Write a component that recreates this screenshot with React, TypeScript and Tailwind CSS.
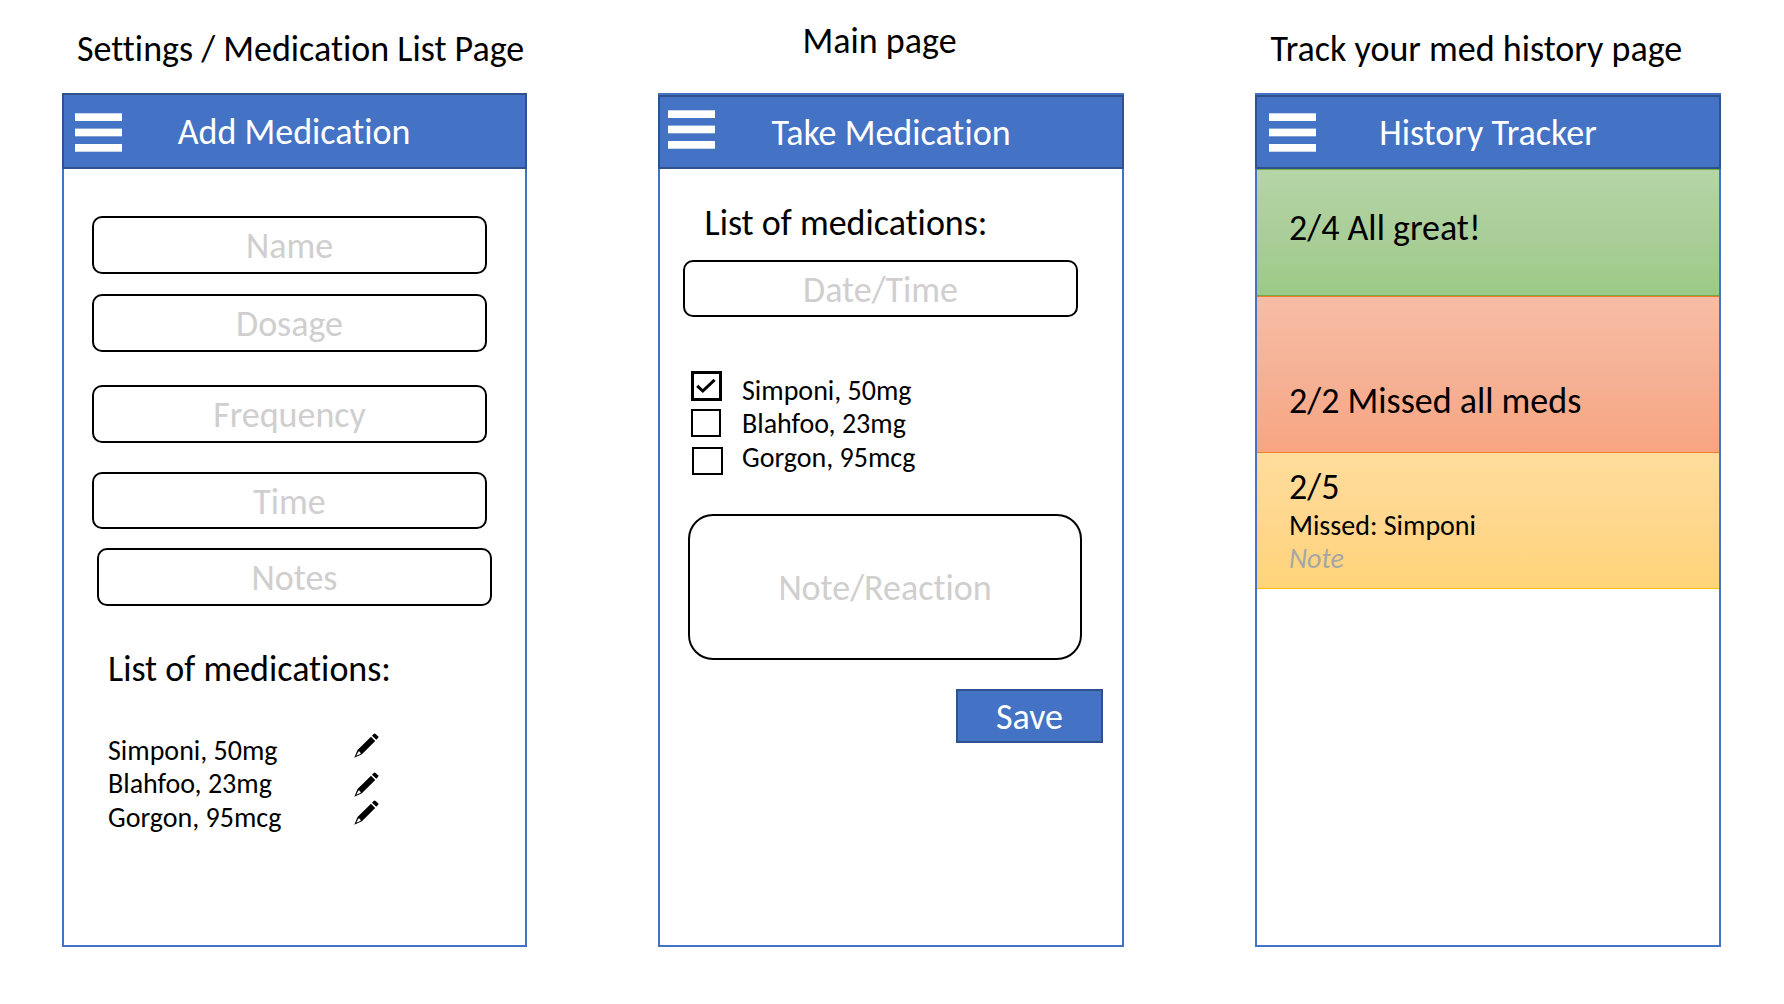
import type { ReactNode } from "react";

function MenuIcon() {
  return (
    <svg width="47" height="39" viewBox="0 0 47 39" fill="#fff" className="shrink-0">
      <rect x="0" y="0.3" width="47" height="7.7" />
      <rect x="0" y="15.6" width="47" height="7.7" />
      <rect x="0" y="31" width="47" height="7.7" />
    </svg>
  );
}

function PencilIcon({ className = "" }: { className?: string }) {
  return (
    <svg width="25" height="25" viewBox="0 0 25 25" className={className}>
      <path d="M18 2.7 19.6 1 Q20.6 0.2 21.6 1 L24 3.3 Q24.8 4.2 24 5.1 L22.3 6.8Z" />
      <path
        fillRule="evenodd"
        d="M17 3.8 21.2 7.9 7.9 21.2 0.3 24.7 3.5 16.9ZM4.5 18.4 2.4 22.2 2.9 22.6 6.7 20.7 Q6.9 19.4 5.8 19.2 Q5.6 18.2 4.5 18.4Z"
      />
    </svg>
  );
}

function Field({ label, className = "" }: { label: string; className?: string }) {
  return (
    <div
      className={`flex w-[395px] items-center justify-center rounded-[10px] border-2 border-black pt-0.5 text-[#d0cece] ${className}`}
    >
      {label}
    </div>
  );
}

function Header({ title, className = "" }: { title: string; className?: string }) {
  return (
    <div
      className={`-mx-0.5 flex items-start border-2 border-[#2f528f] bg-[#4472c4] text-white ${className}`}
    >
      <MenuIcon />
      <div className="flex-1 text-center">{title}</div>
    </div>
  );
}

function Screen({ children }: { children: ReactNode }) {
  return <div className="flex h-[854px] flex-col border-2 border-[#4472c4] bg-white">{children}</div>;
}

const medications = ["Simponi, 50mg", "Blahfoo, 23mg", "Gorgon, 95mcg"];

function MedicationList() {
  return (
    <div className="text-[28px] leading-[33.5px]">
      {medications.map((m) => (
        <div key={m}>{m}</div>
      ))}
    </div>
  );
}

function SettingsPage() {
  return (
    <section className="w-[465px] pt-[27px]">
      <h2 className="mb-[22px] ml-[15px]">Settings / Medication List Page</h2>
      <Screen>
        <Header title="Add Medication" className="-mt-0.5 h-[76px] pt-[18px] pr-[59px] pl-[11px] [&>div]:-mt-[3px]" />
        <div className="ml-7 flex flex-col">
          <Field label="Name" className="mt-[47px] h-[58px]" />
          <Field label="Dosage" className="mt-5 h-[58px]" />
          <Field label="Frequency" className="mt-[33px] h-[58px]" />
          <Field label="Time" className="mt-[29px] h-[57px]" />
          <Field label="Notes" className="mt-[19px] ml-[5px] h-[58px]" />
        </div>
        <div className="mt-[41px] ml-[44px]">
          <h3>List of medications:</h3>
          <div className="mt-[42px] flex">
            <div className="w-[246px] pt-[0.6px]">
              <MedicationList />
            </div>
            <div className="flex flex-col">
              <PencilIcon />
              <PencilIcon className="mt-[13.5px]" />
              <PencilIcon className="mt-[3px]" />
            </div>
          </div>
        </div>
      </Screen>
    </section>
  );
}

function MainPage() {
  return (
    <section className="w-[466px] pt-[19px]">
      <h2 className="mb-[30px] ml-[144.5px]">Main page</h2>
      <Screen>
        <Header title="Take Medication" className="h-[74px] pt-[13px] pr-[55px] pl-2 [&>div]:mt-px" />
        <h3 className="mt-[32px] ml-[44.5px]">List of medications:</h3>
        <Field label="Date/Time" className="mt-[15px] ml-[23px] h-[57px]" />
        <div className="mt-[54px] ml-[31px] flex">
          <div className="flex w-[51px] flex-col">
            <div className="flex h-[30px] w-[30.5px] items-center justify-center border-[3px] border-black">
              <svg width="20" height="16" viewBox="0 0 20 16" fill="none" stroke="#000" strokeWidth="3">
                <path d="M1.2 7.8 6.8 13 18.6 1.8" />
              </svg>
            </div>
            <div className="mt-2 h-7 w-[30px] border-2 border-black" />
            <div className="mt-2.5 ml-px h-7 w-[31px] border-2 border-black" />
          </div>
          <div className="mt-[2.6px]">
            <MedicationList />
          </div>
        </div>
        <div className="mt-[39px] ml-7 flex h-[146px] w-[394px] shrink-0 items-center justify-center rounded-[25px] border-2 border-black pt-0.5 text-[#d0cece]">
          Note/Reaction
        </div>
        <button className="mt-[29px] mr-[19px] flex h-[54px] w-[147px] items-center justify-center self-end border-2 border-[#2f528f] bg-[#4472c4] pt-0.5 text-white">
          Save
        </button>
      </Screen>
    </section>
  );
}

function HistoryPage() {
  return (
    <section className="w-[466px] pt-[27px]">
      <h2 className="mb-[22px] ml-[15.5px]">Track your med history page</h2>
      <Screen>
        <Header title="History Tracker" className="h-[74px] pt-4 pr-[59px] pl-3 [&>div]:-mt-[2px]" />
        <div className="h-[127px] border-y border-[#70ad47] bg-[linear-gradient(#b5d5a7,#aace99_50%,#9cca86)] pt-[36px] pl-8">
          2/4 All great!
        </div>
        <div className="h-[157px] border-y border-[#ed7d31] bg-[linear-gradient(#f7bda4,#f5b195_50%,#f8a581)] pt-[82px] pl-8">
          2/2 Missed all meds
        </div>
        <div className="h-[136px] border-b border-[#ffc000] bg-[linear-gradient(#ffdd9c,#ffd78e_50%,#ffd479)] pt-[12px] pl-8">
          <div>2/5</div>
          <div className="text-[28px] leading-[33px]">
            <div>Missed: Simponi</div>
            <div className="text-[#a6a6a6] italic">Note</div>
          </div>
        </div>
      </Screen>
    </section>
  );
}

export default function App() {
  return (
    <main className="flex h-[1004px] w-[1784px] gap-[131px] overflow-hidden bg-white pl-[62px] font-[Carlito,Calibri,Lato,sans-serif] text-[36px] leading-[44px] whitespace-nowrap text-black [font-variant-ligatures:none]">
      <SettingsPage />
      <MainPage />
      <HistoryPage />
    </main>
  );
}
